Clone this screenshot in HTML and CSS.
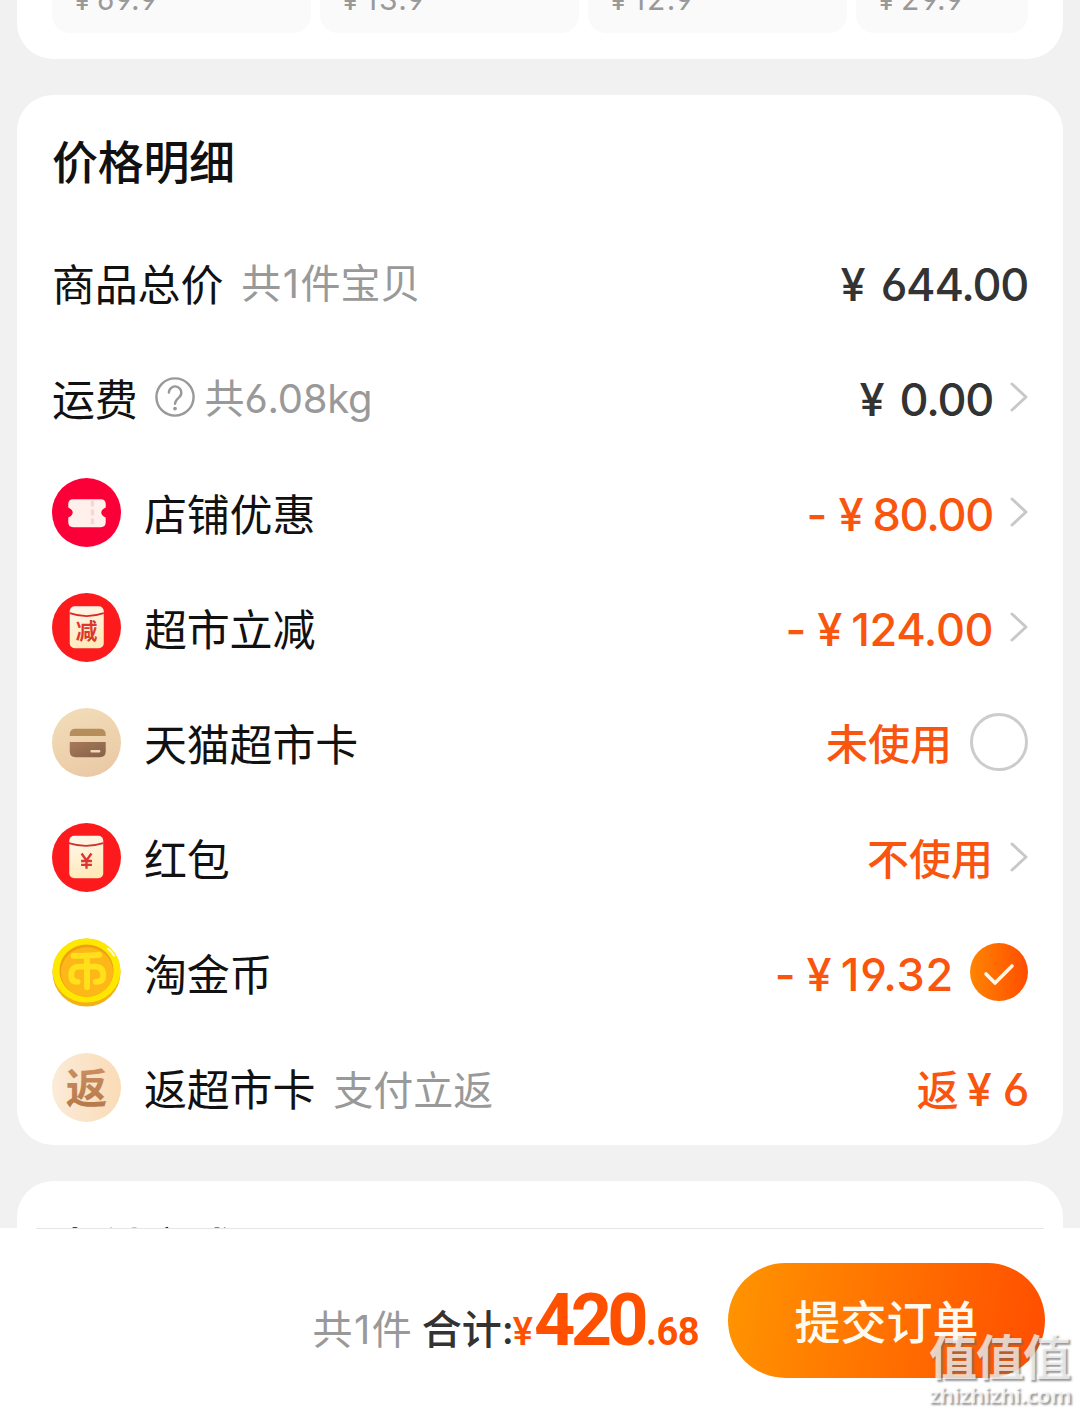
FILE: index.html
```html
<!DOCTYPE html>
<html lang="zh-CN">
<head>
<meta charset="utf-8">
<title>确认订单</title>
<link rel="stylesheet" href="styles.css">
</head>
<body>
<main class="content">
  <section class="card tiles">
    <div class="tile"><span class="yen">¥</span>69.9</div>
    <div class="tile"><span class="yen">¥</span>13.9</div>
    <div class="tile"><span class="yen">¥</span>12.9</div>
    <div class="tile tile-last"><span class="yen">¥</span>29.9</div>
  </section>

  <section class="card detail">
    <h2 class="title">价格明细</h2>
    <div class="row">
      <span class="label">商品总价</span><span class="note">共<span class="num one">1</span>件宝贝</span>
      <span class="price dark"><span class="yen">¥</span><span class="amt">644.00</span></span>
    </div>
    <div class="row">
      <span class="label">运费</span>
      <svg class="help" viewBox="0 0 40 40"><circle cx="20" cy="20" r="18.6"/><path d="M13.900 15.500a6.200 6.200 0 1 1 10.400 4.700c-2.300 2-4.300 3.300-4.300 6.600"/><circle class="dot" cx="20" cy="31.600" r="1.900"/></svg>
      <span class="note weight">共<span class="num">6.08kg</span></span>
      <span class="price dark"><span class="yen">¥</span><span class="amt">0.00</span></span>
      <svg class="arrow" viewBox="0 0 18 32"><path d="M2 3l14 13L2 29"/></svg>
    </div>
    <div class="row">
      <svg class="icon" viewBox="0 0 70 70"><circle cx="35" cy="35" r="35" fill="#fb0038"/><path d="M21 21.500h28.500q5 0 5 5V30q-4.500 2-4.500 5t4.500 5v5q0 5-5 5H21.500q-5 0-5-5v-5q4.500-2 4.500-5 0-3-4.500-5v-3.500q0-5 5-5z" fill="#fff0ec"/><path d="M41 23v25" stroke="#f9d5d6" stroke-width="3.500" stroke-dasharray="6 3"/></svg>
      <span class="label">店铺优惠</span>
      <span class="price"><span class="minus">-</span><span class="yen">¥</span><span class="amt">80.00</span></span>
      <svg class="arrow" viewBox="0 0 18 32"><path d="M2 3l14 13L2 29"/></svg>
    </div>
    <div class="row">
      <svg class="icon" viewBox="0 0 70 70">
        <defs><linearGradient id="packet" x1="0" y1="0" x2="0.300" y2="1"><stop offset="0" stop-color="#fff8f0"/><stop offset="1" stop-color="#ffeaba"/></linearGradient></defs>
        <circle cx="35" cy="35" r="35" fill="#fd1a1c"/><rect x="18" y="13.500" width="34.500" height="42.500" rx="5" fill="url(#packet)"/><path d="M18 20.500q17 6 34.500 0" fill="none" stroke="#df2723" stroke-width="1.800"/><text x="35" y="46.500" class="glyph reduce">减</text></svg>
      <span class="label">超市立减</span>
      <span class="price"><span class="minus">-</span><span class="yen">¥</span><span class="amt with-one">124.00</span></span>
      <svg class="arrow" viewBox="0 0 18 32"><path d="M2 3l14 13L2 29"/></svg>
    </div>
    <div class="row">
      <svg class="icon" viewBox="0 0 70 70">
        <defs><linearGradient id="sand" x1="0.300" y1="0" x2="0.700" y2="1"><stop offset="0" stop-color="#f2dcb8"/><stop offset="1" stop-color="#eac9a5"/></linearGradient><linearGradient id="brown" x1="0" y1="0" x2="1" y2="1"><stop offset="0" stop-color="#a77b58"/><stop offset="1" stop-color="#86604a"/></linearGradient></defs>
        <circle cx="35" cy="35" r="35" fill="url(#sand)"/><path d="M18 28.500V27q0-6 6-6h24.500q6 0 6 6v1.500z" fill="#b58e5c"/><path d="M18 34.500h36.500V44q0 6-6 6H24q-6 0-6-6z" fill="url(#brown)"/><rect x="39" y="42.500" width="10" height="2.600" rx="1" fill="#f2d8b8"/></svg>
      <span class="label">天猫超市卡</span>
      <span class="price state">未使用</span>
      <span class="radio"></span>
    </div>
    <div class="row">
      <svg class="icon" viewBox="0 0 70 70"><circle cx="35" cy="35" r="35" fill="#fd1a1c"/><rect x="17.500" y="13" width="34.500" height="43" rx="5" fill="url(#packet)"/><path d="M17 20.500q17.500 5.500 35 0" fill="none" stroke="#c9342b" stroke-width="1.800"/><path d="M30 31l5 7 5-7M35 38v8.500M29.500 38.500h11M29.500 42.500h11" fill="none" stroke="#dc3430" stroke-width="2.400"/></svg>
      <span class="label">红包</span>
      <span class="price state">不使用</span>
      <svg class="arrow" viewBox="0 0 18 32"><path d="M2 3l14 13L2 29"/></svg>
    </div>
    <div class="row">
      <svg class="icon" viewBox="0 0 70 70"><circle cx="35" cy="35" r="34.500" fill="#f2b116"/><ellipse cx="35" cy="33" rx="34.500" ry="32.500" fill="#fee800"/><ellipse cx="35" cy="33" rx="27.500" ry="26.500" fill="#f09f10"/><ellipse cx="35.500" cy="34.500" rx="26.500" ry="25" fill="#fdb718"/><path d="M22 18q14 .5 26-1M35.500 19v31M26 44.500q-6.500 0-6.500-6.500 0-9 8-9h16q8.500 0 8.500 9 0 6.500-7.500 6.500" fill="none" stroke="#ffe01b" stroke-width="6" stroke-linecap="round"/><path d="M57 11q4 3 6 7" fill="none" stroke="#fffbd0" stroke-width="2" stroke-linecap="round"/></svg>
      <span class="label">淘金币</span>
      <span class="price coin"><span class="minus">-</span><span class="yen">¥</span><span class="amt">19.32</span></span>
      <svg class="check" viewBox="0 0 58 58"><defs><linearGradient id="fire"><stop offset="0" stop-color="#ff8500"/><stop offset="1" stop-color="#ff4d00"/></linearGradient></defs><circle cx="29" cy="29" r="29" fill="url(#fire)"/><path d="M16 31l9 9 17-17" fill="none" stroke="#fff6e8" stroke-width="3.600" stroke-linecap="round" stroke-linejoin="round"/></svg>
    </div>
    <div class="row">
      <svg class="icon" viewBox="0 0 70 70"><defs><linearGradient id="cream"><stop offset="0" stop-color="#fbebd8"/><stop offset="1" stop-color="#fadbb6"/></linearGradient><linearGradient id="copper" x1="0" y1="0" x2="0" y2="1"><stop offset="0" stop-color="#cf9668"/><stop offset="1" stop-color="#b17445"/></linearGradient></defs><circle cx="35" cy="35" r="35" fill="url(#cream)"/><text x="35" y="51" class="glyph back" fill="url(#copper)">返</text></svg>
      <span class="label">返超市卡</span><span class="note">支付立返</span>
      <span class="price rebate">返<span class="yen">¥</span><span class="amt">6</span></span>
    </div>
  </section>

  <section class="card next">
    <h2 class="title">支付方式</h2>
  </section>
</main>

<footer class="bar">
  <span class="count">共<span class="num one">1</span>件</span>
  <span class="sum">合计<span class="colon">:</span></span>
  <span class="total"><span class="cur">¥</span><span class="int">420</span><span class="dec">.68</span></span>
  <button class="submit">提交订单</button>
  <div class="mark"><div class="mark-name">值值值</div><div class="mark-site">zhizhizhi.com</div></div>
</footer>
</body>
</html>
```
FILE: styles.css
```css
* { box-sizing: border-box; }

body {
  margin: 0;
  height: 1414px;
  display: flex;
  flex-direction: column;
  overflow: hidden;
  background: #f1f1f1;
  color: #111;
  font-family: "Noto Sans CJK SC", sans-serif;
  white-space: nowrap;
}

.content {
  flex: 0 0 1228px;
  padding: 0 17px;
  display: flex;
  flex-direction: column;
  gap: 36px;
  overflow: hidden;
}

.card {
  flex: none;
  background: #fff;
  border-radius: 36px;
  padding: 0 35px;
}

.tiles {
  height: 59px;
  border-radius: 0 0 36px 36px;
  display: flex;
  align-items: flex-end;
  gap: 9px;
  padding-bottom: 26px;
  overflow: hidden;
}

.tile {
  flex: 0 0 259px;
  height: 70px;
  border-radius: 18px;
  background: #fafafa;
  padding: 21px 0 0 23px;
  color: #999;
  font: 30px/30px Inter, sans-serif;
  letter-spacing: 1.6px;
  font-feature-settings: "cv03", "cv04";
}
.tile-last { flex-basis: 172px; }
.tile .yen { font-size: 26px; margin-right: 6px; }

.detail { height: 1050px; }

.title {
  margin: 0;
  height: 131px;
  padding-top: 31px;
  font-size: 46px;
  line-height: 67px;
  font-weight: 500;
  letter-spacing: -0.3px;
}
.next .title { padding-top: 32px; }

.row {
  height: 115px;
  padding-bottom: 4px;
  display: flex;
  align-items: center;
}

.label { font-size: 43px; line-height: 60px; letter-spacing: -0.2px; }
.note { font-size: 40px; line-height: 60px; color: #999; margin: 2px 0 0 18px; }
.num { font-family: Inter, sans-serif; font-feature-settings: "cv03", "cv04"; }
.one { margin: 0 1.5px; }
.weight { margin-left: 10px; }
.weight .num { letter-spacing: -0.3px; }
.help {
  width: 40px;
  height: 40px;
  margin-left: 17px;
  fill: none;
  stroke: #999;
  stroke-width: 2.4;
  stroke-linecap: round;
}
.help .dot { fill: #999; stroke: none; }

.icon { flex: none; width: 69px; height: 69px; margin: 1px 23px 0 0; }
.glyph { text-anchor: middle; font-weight: 700; }
.reduce { font-size: 22px; fill: #e0352e; }
.back { font-size: 42px; }

.price {
  margin: 6px 0 0 auto;
  display: flex;
  align-items: baseline;
  color: #fa550f;
  font-size: 42px;
  line-height: 60px;
  font-weight: 500;
}
.state { margin-top: 0; }
.rebate { margin-top: 4px; }
.dark { color: #333; }
.amt, .yen, .minus {
  font-family: Inter, sans-serif;
  font-size: 45px;
  font-weight: 500;
}
.amt { letter-spacing: -1.2px; margin-right: -0.2px; font-feature-settings: "cv03", "cv04"; }
.amt.with-one { letter-spacing: -0.4px; }
.coin .amt { letter-spacing: 0.8px; margin-right: -2px; }
.price .yen { margin-right: 9px; }
.dark .yen { margin-right: 15px; }
.minus { margin-right: 11px; }
.rebate .yen { margin: 0 11px 0 8px; }

.arrow {
  flex: none;
  width: 18px;
  height: 32px;
  margin-left: 17px;
  fill: none;
  stroke: #c8c8c8;
  stroke-width: 3;
  stroke-linecap: round;
  stroke-linejoin: round;
}
.radio, .check { flex: none; width: 58px; height: 58px; margin-left: 18px; }
.radio { border: 3px solid #ccc; border-radius: 50%; }

.bar {
  position: relative;
  flex: 0 0 186px;
  background: #fff;
  display: flex;
  align-items: center;
  justify-content: flex-end;
  padding: 0 35px 2px 0;
}
.bar::before {
  content: "";
  position: absolute;
  top: 0;
  left: 36px;
  right: 36px;
  height: 1px;
  background: #e6e6e6;
}
.count { font-size: 40px; color: #999; margin: 13px 10px 0 0; }
.sum { font-size: 40px; color: #333; font-weight: 500; margin-top: 13px; }
.colon { font-family: Inter, sans-serif; margin-right: -1px; }
.total {
  display: flex;
  align-items: baseline;
  color: #ff5000;
  font-family: Roboto, sans-serif;
  font-weight: 700;
}
.cur { font-size: 38px; font-weight: 500; margin-right: 1px; }
.int { font-size: 72px; letter-spacing: -4.7px; margin-right: 2px; }
.dec { font-size: 38px; letter-spacing: -0.5px; }
.submit {
  width: 317px;
  height: 115px;
  margin-left: 29px;
  border: 0;
  padding: 0 0 2px;
  border-radius: 58px;
  background: linear-gradient(100deg, #ff9500, #ff4d00);
  color: #fffaf0;
  font: 500 46px/113px "Noto Sans CJK SC", sans-serif;
}
.mark {
  position: absolute;
  left: 929px;
  top: 98px;
  color: rgba(255, 255, 255, 0.72);
  text-shadow: 2px 2px 2px rgba(100, 100, 100, 0.65);
}
.mark-name { font-size: 48px; line-height: 56px; font-weight: 700; letter-spacing: -1px; }
.mark-site { font: 700 22px/24px "Open Sans", sans-serif; letter-spacing: -0.5px; }
```
